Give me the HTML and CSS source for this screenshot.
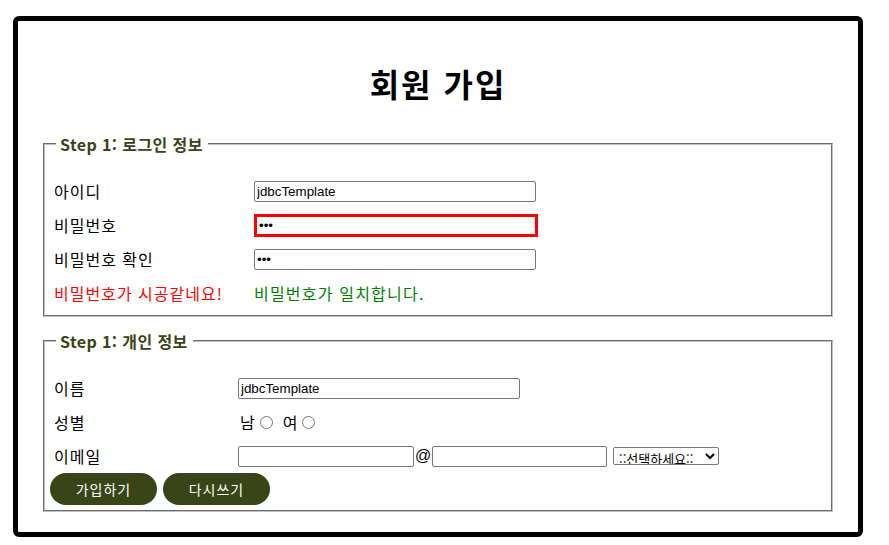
FILE: index.html
```html
<!DOCTYPE html>
<html lang="ko">
<head>
<meta charset="utf-8">
<title>회원 가입</title>
<link rel="stylesheet" href="styles.css">
</head>
<body>
<div class="frame">
  <h1 class="title">회원 가입</h1>
  <form class="join">
    <fieldset class="group">
      <legend class="group-title">Step 1: 로그인 정보</legend>
      <div class="row row-login">
        <span class="label">아이디</span>
        <input class="field" type="text" value="jdbcTemplate">
      </div>
      <div class="row row-login">
        <span class="label">비밀번호</span>
        <input class="field field-error" type="password" value="123">
      </div>
      <div class="row row-login">
        <span class="label">비밀번호 확인</span>
        <input class="field" type="password" value="123">
      </div>
      <div class="row row-login">
        <span class="label msg-bad">비밀번호가 시공같네요!</span>
        <span class="msg-ok">비밀번호가 일치합니다.</span>
      </div>
    </fieldset>

    <fieldset class="group group-personal">
      <legend class="group-title">Step 1: 개인 정보</legend>
      <div class="row row-personal">
        <span class="label">이름</span>
        <input class="field" type="text" value="jdbcTemplate">
      </div>
      <div class="row row-personal">
        <span class="label">성별</span>
        <div class="gender">
          <label class="gender-opt">남<input class="radio" type="radio" name="g"></label>
          <label class="gender-opt">여<input class="radio" type="radio" name="g"></label>
        </div>
      </div>
      <div class="row row-personal">
        <span class="label">이메일</span>
        <div class="email">
          <input class="field field-mail" type="text">
          <span class="at">@</span>
          <input class="field field-domain" type="text">
          <select class="domain-select">
            <option>::선택하세요::</option>
            <option>naver.com</option>
            <option>gmail.com</option>
          </select>
        </div>
      </div>
      <div class="row buttons">
        <button class="btn" type="submit">가입하기</button>
        <button class="btn" type="reset">다시쓰기</button>
      </div>
    </fieldset>
  </form>
</div>
</body>
</html>
```

FILE: styles.css
```css
html, body {
  margin: 0;
  padding: 0;
  background: #fff;
}

body {
  font-family: "Noto Sans CJK KR", "Noto Sans", sans-serif;
  color: #000;
}

.frame {
  box-sizing: border-box;
  width: 850px;
  height: 521px;
  margin: 16px 0 0 13px;
  border: 5px solid #000;
  border-radius: 6px;
  padding: 0 25px;
}

.title {
  margin: 39px 0 0;
  font-size: 32px;
  line-height: 46px;
  font-weight: 700;
  letter-spacing: 2px;
  text-align: center;
}

.join {
  margin: 0;
}

.group {
  margin: 28px 0 0;
  padding: 20px 5px 5px 5px;
  border: 2px groove #c0c0c0;
  min-width: 0;
}

.group-personal {
  margin-top: 14px;
  padding-bottom: 3px;
}

.group-title {
  margin-left: 6px;
  padding: 0 5px 0 4px;
  font-size: 16px;
  line-height: 20px;
  font-weight: 700;
  letter-spacing: 0.4px;
  color: #3a4517;
}

.row {
  display: grid;
  align-items: center;
  height: 34px;
}

.row-login {
  grid-template-columns: 204px 1fr;
}

.row-personal {
  grid-template-columns: 188px 1fr;
}

.label {
  padding-left: 4px;
  font-size: 16px;
  line-height: 20px;
  letter-spacing: 1px;
}

.msg-bad {
  color: #ff0000;
}

.msg-ok {
  font-size: 16px;
  line-height: 20px;
  letter-spacing: 1.2px;
  color: #008000;
}

.field {
  box-sizing: border-box;
  width: 282px;
  height: 21px;
  margin: 0;
  padding: 1px 2px;
  border: 1px solid #767676;
  border-radius: 2px;
  font-family: "Liberation Sans", Arial, sans-serif;
  font-size: 13.33px;
  color: #000;
  background: #fff;
}

.field-error {
  width: 284px;
  height: 23px;
  border: 3px solid #ff0000;
  border-radius: 0;
  padding: 0 2px;
}

.gender {
  display: flex;
  align-items: center;
  gap: 5px;
}

.gender-opt {
  display: flex;
  align-items: center;
  font-size: 16px;
  line-height: 20px;
  padding-left: 2px;
}

.radio {
  width: 13px;
  height: 13px;
  margin: 0 3px 0 5px;
}

.email {
  display: flex;
  align-items: center;
}

.field-mail {
  width: 176px;
}

.field-domain {
  width: 175px;
}

.at {
  width: 18px;
  text-align: center;
  font-family: "Liberation Sans", Arial, sans-serif;
  font-size: 16px;
  line-height: 20px;
}

.domain-select {
  box-sizing: border-box;
  width: 106px;
  height: 18px;
  margin: 0 0 0 6px;
  padding: 0 0 0 1px;
  border: 1px solid #767676;
  border-radius: 2px;
  font-family: "Noto Sans CJK KR", sans-serif;
  font-size: 13px;
  color: #000;
  background: #fff;
}

.buttons {
  display: flex;
  gap: 6px;
  align-items: flex-start;
}

.btn {
  width: 107px;
  height: 32px;
  margin: 0;
  padding: 0;
  border: none;
  border-radius: 16px;
  background: #3a4517;
  color: #fff;
  font-family: "Noto Sans CJK KR", sans-serif;
  font-size: 14px;
  letter-spacing: 1px;
  cursor: pointer;
}
```
